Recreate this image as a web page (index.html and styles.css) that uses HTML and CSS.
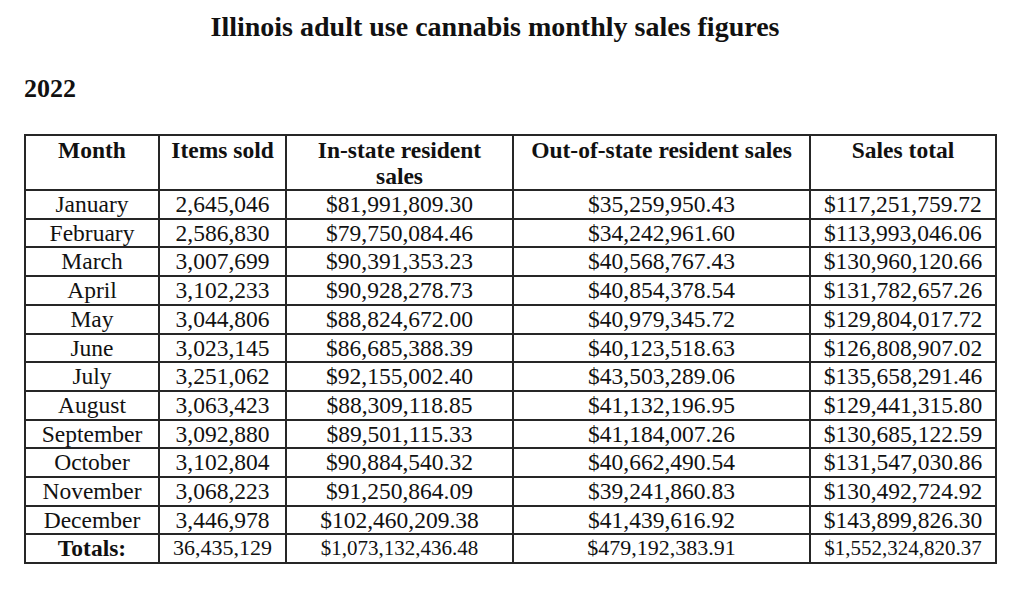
FILE: index.html
```html
<!DOCTYPE html>
<html lang="en">
<head>
<meta charset="utf-8">
<title>Illinois adult use cannabis monthly sales figures</title>
<link rel="stylesheet" href="styles.css">
</head>
<body>
<div class="page">
  <h1 class="title">Illinois adult use cannabis monthly sales figures</h1>
  <h2 class="year">2022</h2>
  <table class="sales">
    <colgroup>
      <col class="c1"><col class="c2"><col class="c3"><col class="c4"><col class="c5">
    </colgroup>
    <thead>
      <tr>
        <th>Month</th>
        <th>Items sold</th>
        <th>In-state resident<br>sales</th>
        <th>Out-of-state resident sales</th>
        <th>Sales total</th>
      </tr>
    </thead>
    <tbody>
      <tr><td>January</td><td>2,645,046</td><td>$81,991,809.30</td><td>$35,259,950.43</td><td>$117,251,759.72</td></tr>
      <tr><td>February</td><td>2,586,830</td><td>$79,750,084.46</td><td>$34,242,961.60</td><td>$113,993,046.06</td></tr>
      <tr><td>March</td><td>3,007,699</td><td>$90,391,353.23</td><td>$40,568,767.43</td><td>$130,960,120.66</td></tr>
      <tr><td>April</td><td>3,102,233</td><td>$90,928,278.73</td><td>$40,854,378.54</td><td>$131,782,657.26</td></tr>
      <tr><td>May</td><td>3,044,806</td><td>$88,824,672.00</td><td>$40,979,345.72</td><td>$129,804,017.72</td></tr>
      <tr><td>June</td><td>3,023,145</td><td>$86,685,388.39</td><td>$40,123,518.63</td><td>$126,808,907.02</td></tr>
      <tr><td>July</td><td>3,251,062</td><td>$92,155,002.40</td><td>$43,503,289.06</td><td>$135,658,291.46</td></tr>
      <tr><td>August</td><td>3,063,423</td><td>$88,309,118.85</td><td>$41,132,196.95</td><td>$129,441,315.80</td></tr>
      <tr><td>September</td><td>3,092,880</td><td>$89,501,115.33</td><td>$41,184,007.26</td><td>$130,685,122.59</td></tr>
      <tr><td>October</td><td>3,102,804</td><td>$90,884,540.32</td><td>$40,662,490.54</td><td>$131,547,030.86</td></tr>
      <tr><td>November</td><td>3,068,223</td><td>$91,250,864.09</td><td>$39,241,860.83</td><td>$130,492,724.92</td></tr>
      <tr><td>December</td><td>3,446,978</td><td>$102,460,209.38</td><td>$41,439,616.92</td><td>$143,899,826.30</td></tr>
      <tr class="totals"><td class="label">Totals:</td><td>36,435,129</td><td class="big">$1,073,132,436.48</td><td>$479,192,383.91</td><td class="big">$1,552,324,820.37</td></tr>
    </tbody>
  </table>
</div>
</body>
</html>
```

FILE: styles.css
```css
html, body {
  margin: 0;
  padding: 0;
  background: #ffffff;
}

body {
  font-family: "Liberation Serif", "Times New Roman", serif;
  color: #111111;
}

.page {
  display: flex;
  flex-direction: column;
  align-items: flex-start;
  padding: 12px 0 0 24px;
}

.title {
  align-self: stretch;
  margin: 0 58px 0 0;
  font-size: 28px;
  line-height: 30px;
  font-weight: bold;
  text-align: center;
}

.year {
  margin: 32px 0 0 0;
  font-size: 26px;
  line-height: 30px;
  font-weight: bold;
}

.sales {
  margin-top: 30px;
  border-collapse: separate;
  border-spacing: 0;
  table-layout: fixed;
  width: 973px;
  border-top: 2px solid #262626;
  border-left: 2px solid #262626;
  font-size: 23.5px;
}

.sales .c1 { width: 134px; }
.sales .c2 { width: 127px; }
.sales .c3 { width: 227px; }
.sales .c4 { width: 297px; }
.sales .c5 { width: 186px; }

.sales th,
.sales td {
  padding: 0;
  border-right: 2px solid #262626;
  border-bottom: 2px solid #262626;
  text-align: center;
  vertical-align: top;
  white-space: nowrap;
}

.sales th {
  height: 54px;
  line-height: 26px;
  font-weight: bold;
  padding-top: 1px;
  box-sizing: border-box;
}

.sales td {
  line-height: 26.7px;
  font-weight: normal;
}

.sales .totals td {
  font-size: 22px;
}

.sales .totals td.big {
  font-size: 21px;
}

.sales .totals .label {
  font-size: 23.5px;
  font-weight: bold;
}
```
